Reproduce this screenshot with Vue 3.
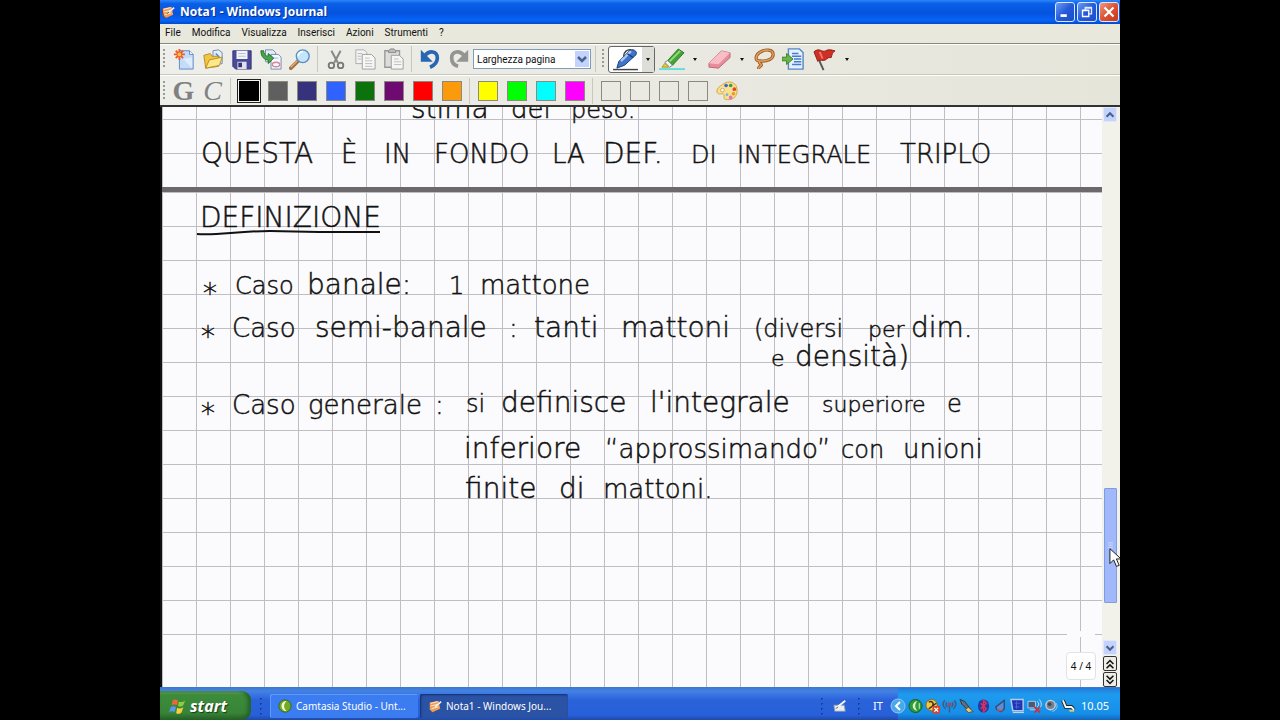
<script setup>
import { ref } from 'vue'

const menus = ['File', 'Modifica', 'Visualizza', 'Inserisci', 'Azioni', 'Strumenti', '?']
const pens = ['#000000', '#5f5f5f', '#37327c', '#2f62ff', '#0c720c', '#6e0a70', '#ff0000', '#fb9a0a']
const markers = ['#ffff00', '#00ff00', '#00ffff', '#ff00ff']
const active = ref('#000000')
const zoomLevel = ref('Larghezza pagina')

// Ink placed freely on the sheet: text, x, baseline, size
const ink = [
  ['stima', 411, 118, 28], ['del', 511, 118, 26], ['peso.', 571, 118, 24],
  ['QUESTA', 201, 163, 28], ['È', 341, 163, 26], ['IN', 384, 163, 26], ['FONDO', 434, 163, 26],
  ['LA', 552, 163, 26], ['DEF.', 603, 163, 28], ['DI', 691, 163, 24],
  ['INTEGRALE', 737, 163, 24], ['TRIPLO', 900, 163, 26],
  ['DEFINIZIONE', 200, 227, 28],
  ['*', 203, 303, 28], ['Caso', 235, 294, 24], ['banale:', 307, 294, 28], ['1', 449, 294, 24], ['mattone', 480, 294, 26],
  ['*', 201, 346, 28], ['Caso', 232, 337, 26], ['semi-banale', 315, 337, 28], [':', 509, 337, 26],
  ['tanti', 534, 337, 28], ['mattoni', 621, 337, 28], ['(diversi', 754, 337, 24], ['per', 868, 337, 22], ['dim.', 911, 337, 28],
  ['e', 771, 366, 22], ['densità)', 795, 366, 28],
  ['*', 201, 423, 28], ['Caso', 232, 414, 26], ['generale', 308, 414, 26], [':', 435, 414, 26],
  ['si', 466, 412, 24], ['definisce', 501, 412, 28], ["l'integrale", 650, 412, 28], ['superiore', 822, 412, 22], ['e', 947, 412, 24],
  ['inferiore', 464, 458, 28], ['“approssimando”', 605, 458, 26], ['con', 841, 458, 24], ['unioni', 903, 458, 26],
  ['finite', 465, 498, 28], ['di', 559, 498, 28], ['mattoni.', 603, 498, 26],
]
</script>

<template>
  <div class="screen">
    <main class="window">
      <header class="title">
        <svg class="i16" viewBox="0 0 16 16"><path d="M2 4 12 2l2 9-9 4-3-3z" fill="#f39a52" /><path d="M3 5l8-2M3 8l9-2M4 11l8-2" stroke="#fff3df" stroke-width="1" /><path d="M1 4l2 9 3 2" fill="none" stroke="#6a3a22" /><path d="M8 9l7-6" stroke="#e9f1fc" stroke-width="2" /><path d="M7 10l2-2" stroke="#333" /></svg>
        <h1>Nota1 - Windows Journal</h1>
        <button class="wb" aria-label="Riduci a icona"><svg viewBox="0 0 20 20"><path d="M5 14h7" stroke="#fff" stroke-width="3" /></svg></button>
        <button class="wb" aria-label="Ripristina"><svg viewBox="0 0 20 20"><path d="M8 8V5h7v7h-3M8 5.500h7M5 8.500h7" fill="none" stroke="#dfe9ff" stroke-width="1.500" /><path d="M5 8h7v7H5z" fill="none" stroke="#fff" stroke-width="1.500" /></svg></button>
        <button class="wb close" aria-label="Chiudi"><svg viewBox="0 0 20 20"><path d="M5 5l10 10M15 5 5 15" stroke="#fff" stroke-width="2.500" /></svg></button>
      </header>

      <nav class="menu"><button v-for="m in menus" :key="m">{{ m }}</button></nav>

      <div class="bar tools">
        <i class="grip"></i>
        <button class="tb" aria-label="Nuova nota"><svg viewBox="0 0 24 24"><path d="M7 3h11l4 4v16H7z" fill="#c4dcfb" stroke="#5b86c0" /><path d="M18 3v4h4" fill="#fff" stroke="#5b86c0" /><path d="M11 12l10 10V10z" fill="#f4f9ff" opacity=".6" /><path d="M7 1v12M1 7h12M3 3l8 8M11 3l-8 8" stroke="#ee5a24" stroke-width="2" /><circle cx="7" cy="7" r="2" fill="#ffc23d" /></svg></button>
        <button class="tb" aria-label="Apri"><svg viewBox="0 0 24 24"><path d="M12 3l6-1 4 3v12l-10 2z" fill="#e4effc" stroke="#6485b0" /><path d="M15 6l4 4" stroke="#4e7fc7" stroke-width="1.500" /><path d="M2 8l7-2 2 3h7v11l-14 2z" fill="#f1c647" stroke="#b68a1c" /><path d="M4 22l4-9 14-3-3 9z" fill="#ffe88b" stroke="#b68a1c" /></svg></button>
        <button class="tb" aria-label="Salva"><svg viewBox="0 0 24 24"><path d="M2 3h20v20H5l-3-3z" fill="#4b4a99" stroke="#37367d" /><path d="M6 3h12v9H6z" fill="#f2f4fa" /><path d="M8 6h8M8 9h8" stroke="#b7bccd" /><path d="M7 15h10v8H7z" fill="#dfe2ec" /><path d="M8 16h4v5H8z" fill="#34346f" /></svg></button>
        <button class="tb" aria-label="Importa"><svg viewBox="0 0 24 24"><path d="M6 2h8l3 3v10H6z" fill="#e2ecf9" stroke="#6e87a8" /><path d="M12 7h8l3 3v13H12z" fill="#f4f8ff" stroke="#6e87a8" /><ellipse cx="17.500" cy="18" rx="4" ry="2.500" fill="none" stroke="#d98895" stroke-width="1.500" /><path d="M14 11h6" stroke="#9fb5d2" /><path d="M1 3c0 7 4 10 8 10v4l6-6-6-5v3C6 9 4 6 4 3z" fill="#48a648" stroke="#216d2c" /></svg></button>
        <button class="tb" aria-label="Trova"><svg viewBox="0 0 24 24"><path d="M2 22l8-8" stroke="#a36f40" stroke-width="4" stroke-linecap="round" /><path d="M2 21l7-7" stroke="#e3ae77" stroke-width="1.500" /><circle cx="15" cy="9" r="7" fill="#c4e5fa" stroke="#5b8fc4" stroke-width="1.500" /><path d="M10 9a5 5 0 0 1 5-5" fill="none" stroke="#fff" stroke-width="2" /></svg></button>
        <i class="sep"></i>
        <button class="tb" aria-label="Taglia"><svg viewBox="0 0 24 24"><path d="M7 3l7 13M17 3l-7 13" stroke="#888" stroke-width="2.200" /><circle cx="7" cy="19" r="3" fill="none" stroke="#777" stroke-width="2" /><circle cx="17" cy="19" r="3" fill="none" stroke="#777" stroke-width="2" /></svg></button>
        <button class="tb" aria-label="Copia"><svg viewBox="0 0 24 24"><path d="M2 2h9l3 3v12H2z" fill="#f3f3f1" stroke="#aaa" /><path d="M9 7h10l4 4v12H9z" fill="#f8f8f7" stroke="#999" /><path d="M12 11h5M12 14h8M12 17h8M12 20h8M4 6h5M4 9h4M4 12h4" stroke="#b9b9b9" /></svg></button>
        <button class="tb" aria-label="Incolla"><svg viewBox="0 0 24 24"><path d="M2 3h16v18H2z" fill="#ddd" stroke="#999" stroke-width="1.500" /><path d="M6 5V3l2-2h4l2 2v2z" fill="#bbb" stroke="#888" /><path d="M9 8h9l4 4v11H9z" fill="#f6f6f4" stroke="#999" /><path d="M12 12h5M12 15h8M12 18h8" stroke="#bbb" /></svg></button>
        <i class="sep"></i>
        <button class="tb" aria-label="Annulla"><svg viewBox="0 0 24 24"><path d="M6 9C11 2 20 3 20 11c0 5-3 8-8 10" fill="none" stroke="#2767b2" stroke-width="4" /><path d="M2 2v13h13z" fill="#2767b2" /></svg></button>
        <button class="tb" aria-label="Ripeti"><svg viewBox="0 0 24 24"><path d="M18 9C13 2 4 3 4 11c0 5 3 8 7 9" fill="none" stroke="#949494" stroke-width="4" /><path d="M22 2v13H9z" fill="#949494" /></svg></button>
        <span class="combo">
          <select v-model="zoomLevel" aria-label="Zoom"><option>Larghezza pagina</option><option>100%</option></select>
          <svg viewBox="0 0 14 16"><path d="M3 6l4 4 4-4" fill="none" stroke="#48618f" stroke-width="2.500" /></svg>
        </span>
        <i class="sep"></i><i class="grip"></i>
        <div class="split on">
          <button aria-label="Penna"><svg viewBox="0 0 28 24"><path d="M1 22.500h26" stroke="#444" stroke-width="1.500" /><path d="M5 21l2-7L18 3c3-3 9 0 7 4L13 18z" fill="#3f74cb" stroke="#173e83" /><path d="M10 13l9-9" stroke="#a9c9f5" stroke-width="2.500" stroke-linecap="round" /><path d="M16 6l6 4" stroke="#173e83" stroke-width="1.500" /><path d="M12 9c0-5 4-8 8-7" fill="none" stroke="#444" stroke-width="1.500" /></svg></button>
          <button class="drop" aria-label="Tipi di penna"></button>
        </div>
        <div class="split">
          <button aria-label="Evidenziatore"><svg viewBox="0 0 28 24"><path d="M0 22h27" stroke="#62ddd9" stroke-width="2" /><path d="M9 13L20 1l6 4-12 13z" fill="#46a337" stroke="#2b7a24" /><path d="M11 14L22 3" stroke="#98d97f" stroke-width="2" /><path d="M6 15l3-2 5 5-3 2z" fill="#f5f8f3" stroke="#68867f" /><path d="M3 20l3-4 4 4z" fill="#e4ce36" stroke="#a89a2c" /></svg></button>
          <button class="drop" aria-label="Tipi di evidenziatore"></button>
        </div>
        <div class="split">
          <button aria-label="Gomma"><svg viewBox="0 0 28 24"><path d="M3 16L16 3l9 2v5L13 21 3 20z" fill="#e88c9b" stroke="#b96d78" /><path d="M3 16L16 3l9 2-12 12z" fill="#f9bdc5" /></svg></button>
          <button class="drop" aria-label="Tipi di gomma"></button>
        </div>
        <button class="tb" aria-label="Selezione"><svg viewBox="0 0 24 24"><path d="M8 14C2 15 2 9 7 5c6-4 15-4 15 2 0 5-7 8-14 7zM8 14c-3 3 2 3 1 5-1 1-3 1-3 4" fill="none" stroke="#9c5b23" stroke-width="3.500" /><path d="M8 14C2 15 2 9 7 5c6-4 15-4 15 2 0 5-7 8-14 7zM8 14c-3 3 2 3 1 5-1 1-3 1-3 4" fill="none" stroke="#e9a25c" stroke-width="1.500" /></svg></button>
        <button class="tb" aria-label="Inserisci spazio"><svg viewBox="0 0 24 24"><path d="M7 1h12l4 4v18H7z" fill="#e5f0ff" stroke="#5686c6" stroke-width="1.500" /><path d="M11 6h7M11 9h10M13 12h8M13 15h8M11 18h10" stroke="#477cc8" stroke-width="1.500" /><path d="M0 10h5V6l7 6-7 6v-4H0z" fill="#65b747" stroke="#397b28" /></svg></button>
        <div class="split flag">
          <button aria-label="Contrassegno"><svg viewBox="0 0 28 24"><path d="M4 3l9 20" stroke="#555" stroke-width="2" /><path d="M3 4c6-5 8 1 12-1 3-2 6-1 10 0-3 1-3 4-4 7-4-1-5 3-8 3s-5-1-6 1z" fill="#cf2f24" stroke="#8e211c" /><path d="M9 4l3 7" stroke="#ee7569" stroke-width="2" /></svg></button>
          <button class="drop" aria-label="Tipi di contrassegno"></button>
        </div>
      </div>

      <div class="bar palette">
        <i class="grip"></i>
        <button class="tb letter bold" aria-label="Grassetto">G</button>
        <button class="tb letter" aria-label="Corsivo">C</button>
        <i class="sep"></i>
        <button v-for="c in pens" :key="c" class="cell" :class="{ sel: active === c }" :aria-label="'Colore ' + c" @click="active = c"><i :style="{ background: c }"></i></button>
        <i class="sep"></i>
        <button v-for="c in markers" :key="c" class="cell" :class="{ sel: active === c }" :aria-label="'Colore ' + c" @click="active = c"><i :style="{ background: c }"></i></button>
        <i class="sep"></i>
        <button v-for="n in 4" :key="n" class="cell" :aria-label="'Colore libero ' + n"><i></i></button>
        <button class="tb" aria-label="Altri colori"><svg viewBox="0 0 24 24"><path d="M7 5c7-6 17-2 16 7 0 7-6 11-13 9-3-1 1-5-3-6-3 0-6 1-6-3 0-3 3-5 6-7z" fill="#f9df91" stroke="#d1a33c" /><circle cx="11" cy="6" r="2" fill="#3668c9" /><circle cx="16" cy="6" r="2" fill="#3f9c50" /><circle cx="20" cy="10" r="2" fill="#e04a24" /><circle cx="19" cy="15" r="2" fill="#e79b2b" /><circle cx="16" cy="19" r="2" fill="#df74bd" /><circle cx="12" cy="16" r="1.500" fill="#79b7cf" /><circle cx="7" cy="11" r="2" fill="#fff" stroke="#c9a54d" /></svg></button>
      </div>

      <section class="doc">
        <div class="sheets">
          <div class="sheet upper"></div>
          <div class="sheet lower"></div>
          <div class="sheet tail"></div>
          <svg class="ink">
            <g transform="translate(-162 -107)">
              <text v-for="(w, n) in ink" :key="n" :x="w[1]" :y="w[2]" :font-size="w[3]">{{ w[0] }}</text>
              <path d="M197 234C215 236 238 231 270 231L319 232 380 232" fill="none" stroke="#111" stroke-width="2" />
            </g>
          </svg>
          <output class="page">4 / 4</output>
        </div>
        <aside class="scroll">
          <button class="sb" aria-label="Scorri su"><svg viewBox="0 0 14 14"><path d="M3 9l4-4 4 4" fill="none" stroke="#48618f" stroke-width="2.500" /></svg></button>
          <div class="rail">
            <i class="before"></i>
            <button class="thumb" aria-label="Posizione"><svg viewBox="0 0 14 10"><path d="M4 1h6M4 4h6M4 7h6" stroke="#d9e6ff" /></svg></button>
            <i class="after"></i>
            <svg class="cursor" viewBox="0 0 14 22"><path d="M1 1v16l4-4 3 7 3-1-3-7h5z" fill="#fff" stroke="#111" /></svg>
          </div>
          <button class="sb" aria-label="Scorri giù"><svg viewBox="0 0 14 14"><path d="M3 5l4 4 4-4" fill="none" stroke="#48618f" stroke-width="2.500" /></svg></button>
          <button class="pg" aria-label="Pagina precedente"><svg viewBox="0 0 14 14"><path d="M3 7l4-4 4 4M3 12l4-4 4 4" fill="none" stroke="#111" stroke-width="1.800" /></svg></button>
          <button class="pg" aria-label="Pagina successiva"><svg viewBox="0 0 14 14"><path d="M3 2l4 4 4-4M3 7l4 4 4-4" fill="none" stroke="#111" stroke-width="1.800" /></svg></button>
        </aside>
      </section>

      <footer class="taskbar">
        <button class="start"><svg viewBox="0 0 20 20"><path d="M4 4c2-2 4-1 6 0L9 9C7 8 5 8 3 9z" fill="#ee6538" /><path d="M11 5c2 1 4 1 7-1l-2 5c-2 2-4 2-6 1z" fill="#8cce3c" /><path d="M2 11c2-1 4-1 6 0l-2 6c-2-2-4-1-6 0z" fill="#5a97ef" /><path d="M9 12c2 1 4 1 7-1l-2 6c-2 2-4 2-6 1z" fill="#f9cf3b" /></svg>start</button>
        <i class="dots"></i>
        <button class="task"><svg class="i16" viewBox="0 0 16 16"><circle cx="8" cy="8" r="7" fill="#72ab1d" stroke="#35620d" /><path d="M10 2a6 6 0 0 0 0 12c-4-4-4-8 0-12z" fill="#f3f9d8" /></svg><span>Camtasia Studio - Unt...</span></button>
        <button class="task pressed"><svg class="i16" viewBox="0 0 16 16"><path d="M2 4 12 2l2 9-9 4-3-3z" fill="#f39a52" /><path d="M3 5l8-2M3 8l9-2M4 11l8-2" stroke="#fff3df" /><path d="M8 9l7-6" stroke="#e9f1fc" stroke-width="2" /></svg><span>Nota1 - Windows Jou...</span></button>
        <span class="fill"></span>
        <i class="dots"></i>
        <button class="tablet" aria-label="Pannello input"><svg class="i16" viewBox="0 0 16 16"><path d="M1 7h12l1 7H2z" fill="#e8edf2" stroke="#8695aa" /><path d="M4 10l10-8" stroke="#f8f8f0" stroke-width="2" /><path d="M3 11l3-2" stroke="#555" /></svg></button>
        <i class="dots"></i>
        <span class="lang">IT</span>
        <div class="tray">
          <button class="chev" aria-label="Mostra icone"><svg viewBox="0 0 16 16"><circle cx="8" cy="8" r="7" fill="#4aa7ec" stroke="#8bcaf5" /><path d="M10 4L6 8l4 4" fill="none" stroke="#fff" stroke-width="2" /></svg></button>
          <svg viewBox="0 0 16 16"><circle cx="8" cy="8" r="7" fill="#2e9b3b" stroke="#175c25" /><path d="M10 3a5 5 0 0 0 0 10c-3-3-3-7 0-10z" fill="#d9f3c7" /><path d="M12 5v6" stroke="#d9f3c7" /></svg>
          <svg viewBox="0 0 16 16"><circle cx="7" cy="7" r="6" fill="#f2c73b" stroke="#8c6a16" /><path d="M4 4c3-2 6 1 4 4l-4 3M8 8l4-3" fill="none" stroke="#333" stroke-width="1.500" /><path d="M8 8h8v8H8z" fill="#d8432d" /><path d="M10 10l4 4M14 10l-4 4" stroke="#fff" stroke-width="1.500" /></svg>
          <svg viewBox="0 0 16 16"><path d="M8 6v9M3 2c-3 3-2 7 1 9M13 2c3 3 2 7-1 9M5 4c-1 2-1 4 1 5M11 4c1 2 1 4-1 5" fill="none" stroke="#3f5c84" stroke-width="1.600" /><circle cx="8" cy="6" r="2" fill="#9b4d60" /></svg>
          <svg viewBox="0 0 16 16"><path d="M1 1l5 2 6 8-2 2-7-7z" fill="#636d78" stroke="#2d3740" /><path d="M10 9l5 5-5 1-3-3z" fill="#e4c77d" stroke="#5c4d2c" /></svg>
          <svg viewBox="0 0 16 16"><ellipse cx="8" cy="8" rx="6" ry="7" fill="#223ba5" /><path d="M5 5l6 6-3 3V2l3 3-6 6" fill="none" stroke="#df2f58" stroke-width="1.600" /></svg>
          <svg viewBox="0 0 16 16"><path d="M12 2v9l-3 3-5-2-1-3z" fill="#5a8fd5" stroke="#3c4871" stroke-width="1.500" /><path d="M4 12l6 1" stroke="#c55060" stroke-width="1.500" /></svg>
          <svg viewBox="0 0 16 16"><path d="M1 1h13v12H3z" fill="#2034b5" stroke="#b7cbe9" stroke-width="1.500" /><path d="M5 5h6M5 9h5M7 3v8" stroke="#4a6cd6" /><path d="M3 15h12" stroke="#ddd" /></svg>
          <svg viewBox="0 0 16 16"><path d="M1 3h8v7H1zM3 12h6" fill="#465a7e" stroke="#c5cfde" /><path d="M11 3c2 2 2 4 0 6M13 1c3 3 3 7 0 10" fill="none" stroke="#d7e6f4" /><path d="M8 9l6 6M14 9l-6 6" stroke="#c53642" stroke-width="2" /></svg>
          <svg viewBox="0 0 16 16"><circle cx="7" cy="7" r="5" fill="#75808c" stroke="#c6ced6" stroke-width="1.500" /><circle cx="6" cy="6" r="2" fill="#3e4c5a" /><path d="M13 5c2 3 1 7-4 9" fill="none" stroke="#a8cdea" /></svg>
          <svg viewBox="0 0 16 16"><path d="M2 2l3 7h6l3 3" fill="none" stroke="#222" stroke-width="4" /><path d="M2 2l3 7h6l3 3" fill="none" stroke="#f7f7ee" stroke-width="2" /><path d="M9 13h5" stroke="#dccf83" stroke-width="2" /></svg>
          <time>10.05</time>
        </div>
      </footer>
    </main>
  </div>
</template>

<style>
body { margin: 0; background: #000; }
</style>

<style scoped>
* { box-sizing: border-box; }
.screen { min-height: 100vh; padding: 0 12.5vw; background: #000; font-family: "Noto Sans", "Open Sans", sans-serif; font-size: 10px; color: #111; }
.window { min-height: 100vh; display: flex; flex-direction: column; background: #ece9d8; overflow: hidden; }
button { margin: 0; padding: 0; border: 0; background: none; color: inherit; font: inherit; flex: none; }
svg { display: block; flex: none; }
.i16 { width: 14px; height: 14px; }

.title { height: 24px; display: flex; align-items: center; gap: 2px; padding: 0 1px; background: linear-gradient(#2c87f8 0, #0a5fe8 15%, #0553df 55%, #0664f6 85%, #0449c9 100%); color: #fff; }
.title h1 { flex: 1; margin: 0 0 0 3px; font-size: 12px; line-height: 16px; font-weight: 700; text-shadow: 1px 1px #0a318f; white-space: nowrap; }
.wb { width: 20px; height: 20px; border: 1px solid #dbe7ff; border-radius: 3px; background: linear-gradient(135deg, #6c9bf3, #2459d9 50%, #1b4fc8); }
.wb svg { width: 18px; height: 18px; }
.close { background: linear-gradient(135deg, #ee9a80, #dd5233 50%, #c23b1c); }

.menu { height: 19px; display: flex; align-items: center; gap: 11px; padding: 0 5px 2px; background: #e8e8dc; font-family: Roboto, "Noto Sans", sans-serif; white-space: nowrap; }
.bar { display: flex; align-items: center; background: linear-gradient(90deg, #eeeeea, #e6e5da); }
.tools { height: 32px; border-top: 1px solid #85887b; border-bottom: 1px solid #c8c7ba; box-shadow: inset 0 1px #fff; }
.palette { height: 32px; border-top: 1px solid #fff; border-bottom: 2px solid #33332f; }
.grip { width: 3px; height: 20px; margin: 0 3px; flex: none; background: repeating-linear-gradient(#9a9a90 0 2px, transparent 2px 4px); background-size: 2px 100%; background-repeat: no-repeat; }
.sep { width: 1px; height: 26px; margin: 0 3px; flex: none; background: #c9c8bb; }
.tb { width: 29px; height: 28px; display: grid; place-items: center; }
.tb svg { width: 22px; height: 22px; }
.combo { position: relative; width: 118px; height: 20px; flex: none; margin-right: 1px; }
.combo select { appearance: none; width: 100%; height: 100%; padding: 0 18px 0 3px; border: 1px solid #7f9db9; border-radius: 0; background: #fff; font-family: Roboto, "Noto Sans", sans-serif; font-size: 10px; color: #111; }
.combo svg { position: absolute; right: 2px; top: 2px; width: 14px; height: 16px; background: #c3d3fd; pointer-events: none; }
.split { height: 27px; width: 47px; display: flex; align-items: center; border: 1px solid transparent; border-radius: 3px; flex: none; }
.split > button:first-child { width: 33px; height: 25px; display: grid; place-items: center; }
.split svg { width: 27px; height: 23px; }
.split .drop { width: 12px; height: 25px; display: grid; place-items: center; }
.drop::after { content: ""; border: 2px solid transparent; border-top: 3px solid #111; border-bottom: 0; }
.on { background: #fff; border-color: #666; }
.on .drop { background: #deded8; }
.letter { font: italic 28px/28px "Liberation Serif", serif; color: #808080; }
.bold { font-weight: 700; font-style: normal; }
.cell { width: 29px; height: 25px; display: grid; place-items: center; }
.cell i { width: 20px; height: 20px; border: 1px solid #8a8a82; }
.cell.sel i { width: 24px; height: 24px; border: 1px solid #222; box-shadow: inset 0 0 0 1px #f4f4f0; }

.doc { flex: 1; display: flex; border-left: 2px solid #111; }
.sheets { flex: 1; position: relative; display: flex; flex-direction: column; overflow: hidden; }
.sheet { background-color: #fbfafc; background-image: linear-gradient(90deg, #bfbfc3 1px, transparent 1px), linear-gradient(#bfbfc3 1px, transparent 1px); background-size: 34px 34px; }
.upper { height: 80px; background-position: 0 12px; }
.lower { flex: 1; border-top: 5px solid #6b696b; }
.tail { height: 50px; background-image: linear-gradient(90deg, #bfbfc3 1px, transparent 1px); }
.ink { position: absolute; inset: 0; width: 100%; height: 100%; }
.ink text { font-family: "DejaVu Sans", sans-serif; font-weight: 200; fill: #111; stroke: #111; stroke-width: 0.5px; }
.page { position: absolute; right: 6px; bottom: 7px; width: 30px; height: 28px; display: grid; place-items: center; border: 1px solid #e2e2e6; border-radius: 4px; background: #fff; }
.page::before { content: ""; position: absolute; left: 0; right: 0; top: -22px; height: 6px; background: #fbfafc; }
.scroll { width: 18px; flex: none; display: flex; flex-direction: column; align-items: center; padding-right: 2px; background: #f2f1ea; }
.sb { width: 14px; height: 15px; border: 1px solid #dfe8fd; border-radius: 2px; background: #c3d3fc; }
.sb svg { width: 12px; height: 12px; }
.rail { position: relative; flex: 1; width: 14px; display: flex; flex-direction: column; align-items: center; }
.before { flex: 368; }
.after { flex: 37; }
.thumb { flex: 114; width: 13px; border: 1px solid #7e9ce0; border-radius: 1px; background: #a1b9fb; display: grid; place-items: center; }
.thumb svg { width: 11px; height: 8px; }
.cursor { position: absolute; left: 6px; top: 82%; width: 13px; height: 22px; }
.pg { width: 14px; height: 15px; margin-top: 1px; border: 1px solid #333; border-radius: 2px; background: #eeede6; }
.pg svg { width: 12px; height: 12px; }

.taskbar { height: 33px; padding-top: 4px; display: flex; align-items: center; background: linear-gradient(#3c78cc 0, #4482e2 12%, #3c79e4 20%, #2a62d9 40%, #2860da 85%, #1d49a8 100%); color: #fff; white-space: nowrap; }
.start { align-self: stretch; width: 91px; display: flex; align-items: center; gap: 3px; padding-left: 9px; border-radius: 0 9px 9px 0; background: linear-gradient(#6aa764 0, #3c8c3a 15%, #388438 75%, #256325 100%); box-shadow: inset -3px 0 4px #245d2a; font: italic 700 16px/20px "Open Sans", sans-serif; text-shadow: 1px 1px 1px #173c17; }
.start svg { width: 18px; height: 18px; }
.dots { width: 5px; height: 20px; margin: 0 7px; flex: none; background: radial-gradient(circle, #173f9d 1px, transparent 1px) 0 0 / 5px 5px; }
.task { width: 148px; height: 24px; margin-right: 2px; display: flex; align-items: center; gap: 4px; padding-left: 8px; border-radius: 2px; background: #3b7cf0; box-shadow: inset 1px 1px #5f9bfa; }
.pressed { background: #2a52a5; box-shadow: inset 1px 1px 2px #142f70; }
.fill { flex: 1; }
.tablet { width: 18px; display: grid; place-items: center; }
.lang { width: 30px; padding-left: 5px; font-size: 11px; }
.tray { align-self: stretch; width: 222px; margin-top: -3px; padding: 3px 0 0; display: flex; align-items: center; gap: 2px; background: linear-gradient(#2379d8 0, #1e9bee 20%, #168fe8 80%, #1266bd 100%); }
.tray > svg { width: 15px; height: 16px; }
.chev { margin-left: -8px; }
.chev svg { width: 16px; height: 16px; }
.tray time { margin-left: 3px; font-size: 11px; }
</style>
